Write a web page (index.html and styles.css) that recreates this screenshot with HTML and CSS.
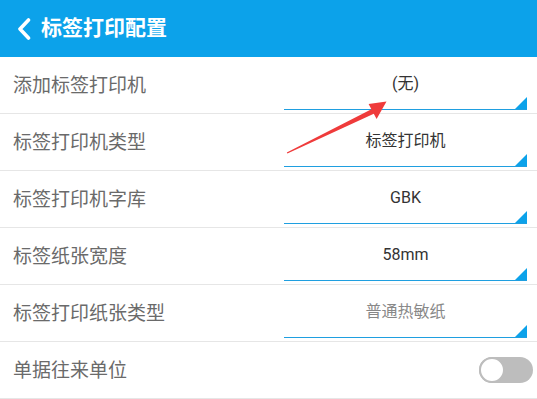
FILE: index.html
```html
<!DOCTYPE html>
<html lang="zh-CN">
<head>
<meta charset="utf-8">
<title>标签打印配置</title>
<link rel="stylesheet" href="styles.css">
</head>
<body>
<div class="page">
  <header class="topbar">
    <svg class="back" width="14" height="22" viewBox="0 0 14 22" aria-hidden="true">
      <polyline points="11.5,2 3,11 11.5,20" fill="none" stroke="#fff" stroke-width="3.6" stroke-linecap="round" stroke-linejoin="round"/>
    </svg>
    <h1 class="title">标签打印配置</h1>
  </header>
  <ul class="list">
    <li class="row">
      <span class="label">添加标签打印机</span>
      <div class="spinner"><span class="value">(无)</span></div>
    </li>
    <li class="row">
      <span class="label">标签打印机类型</span>
      <div class="spinner"><span class="value">标签打印机</span></div>
    </li>
    <li class="row">
      <span class="label">标签打印机字库</span>
      <div class="spinner"><span class="value">GBK</span></div>
    </li>
    <li class="row">
      <span class="label">标签纸张宽度</span>
      <div class="spinner"><span class="value">58mm</span></div>
    </li>
    <li class="row">
      <span class="label">标签打印纸张类型</span>
      <div class="spinner"><span class="value hint">普通热敏纸</span></div>
    </li>
    <li class="row">
      <span class="label">单据往来单位</span>
      <div class="switch"><span class="knob"></span></div>
    </li>
  </ul>
  <svg class="arrow" width="537" height="399" viewBox="0 0 537 399" aria-hidden="true">
    <polygon points="286.8,152.6 371.4,109.3 368.6,104 386.5,101.6 376.6,119 373.8,113.7 287.4,153.6" fill="#ef3b3b"/>
  </svg>
</div>
</body>
</html>
```
FILE: styles.css
```css
* { box-sizing: border-box; }
html, body { margin: 0; padding: 0; background: #fff; }
body {
  font-family: Roboto, "Noto Sans CJK SC", "Noto Sans", sans-serif;
  width: 537px;
  height: 399px;
  overflow: hidden;
}
.page { position: relative; width: 537px; height: 399px; }

.topbar {
  height: 57px;
  background: #0ca2ea;
  display: flex;
  align-items: center;
  padding-left: 17px;
  gap: 10px;
}
.back { display: block; margin-top: 1px; }
.title {
  margin: 0;
  color: #fff;
  font-size: 21px;
  font-weight: 700;
  letter-spacing: 0;
  line-height: 1;
}

.list { list-style: none; margin: 0; padding: 0; }
.row {
  height: 57px;
  border-bottom: 1px solid #e6e6e6;
  display: flex;
  align-items: center;
  justify-content: space-between;
}
.label {
  padding-left: 13px;
  font-size: 19px;
  color: #6a6a6a;
  line-height: 1;
}
.spinner {
  position: relative;
  width: 243px;
  height: 51px;
  margin: 2px 10px 3px 0;
  align-self: flex-start;
  border-bottom: 1px solid #1f9fe0;
  display: flex;
  align-items: center;
  justify-content: center;
}
.spinner::after {
  content: "";
  position: absolute;
  right: 0;
  bottom: 0;
  width: 12px;
  height: 12px;
  background: #0ca2ea;
  clip-path: polygon(100% 0, 100% 100%, 0 100%);
}
.value {
  font-size: 16px;
  color: #333;
  line-height: 1;
}
.value.hint { color: #888; }

.switch {
  position: relative;
  width: 54px;
  height: 26px;
  margin-right: 4px;
  border-radius: 13px;
  background: #bdbdbd;
}
.knob {
  position: absolute;
  left: 0;
  top: 0;
  width: 26px;
  height: 26px;
  border-radius: 50%;
  background: #fff;
  border: 2px solid #bdbdbd;
}

.arrow {
  position: absolute;
  left: 0;
  top: 0;
  pointer-events: none;
}
```
